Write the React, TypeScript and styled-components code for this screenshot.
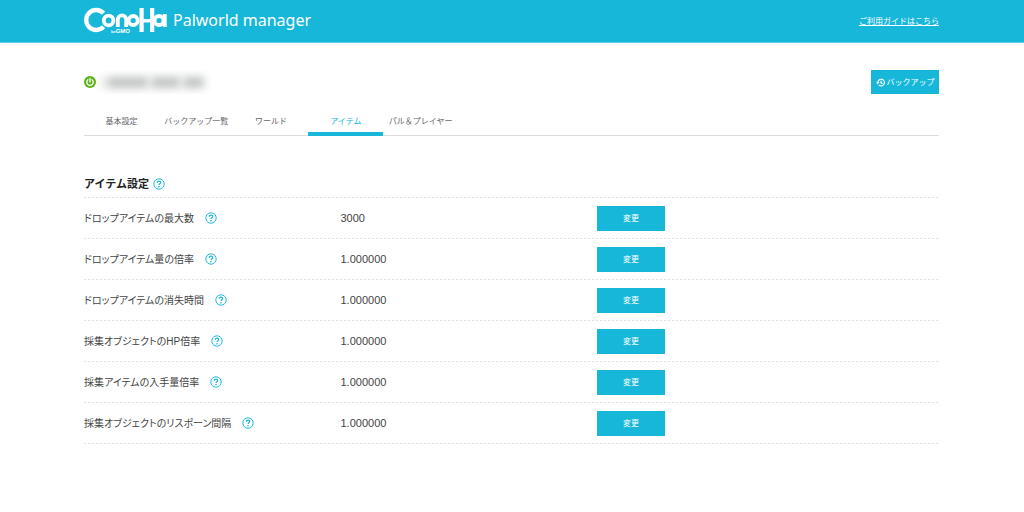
import React from "react";
import styled, { createGlobalStyle, css } from "styled-components";

const cyan = "#17b7da";

const GlobalStyle = createGlobalStyle`
  *, *::before, *::after { box-sizing: border-box; }
  body {
    margin: 0;
    background: #fff;
    color: #444;
    font-family: "Liberation Sans", "Noto Sans CJK JP", sans-serif;
    font-size: 10px;
    line-height: 16px;
  }
`;

const Header = styled.header`
  display: flex;
  align-items: center;
  justify-content: space-between;
  height: 43px;
  padding: 0 85px 3px 84px;
  background: ${cyan};
  border-bottom: 1px solid #5acce5;
`;

const Brand = styled.a`
  display: flex;
  align-items: center;
  gap: 6px;
  color: #fff;
  text-decoration: none;
`;

const BrandName = styled.span`
  font: 400 16px/24px "Noto Sans", "Open Sans", sans-serif;
`;

const GuideLink = styled.a`
  padding-top: 5px;
  color: #fff;
  font-size: 8px;
  text-underline-offset: 1px;
`;

const Page = styled.main`
  padding: 27px 85px 40px 84px;
`;

const ServerBar = styled.div`
  display: flex;
  align-items: center;
  justify-content: space-between;
`;

const Server = styled.div`
  display: flex;
  align-items: center;
`;

const HiddenName = styled.div`
  display: flex;
  align-items: center;
  gap: 3px;
  width: 116px;
  height: 24px;
  padding: 0 8px 0 4px;
  overflow: hidden;
`;

const Smudge = styled.span<{ $grow: number; $faint?: boolean }>`
  flex: ${(p) => p.$grow} 1 0;
  height: 11px;
  background: ${(p) => (p.$faint ? "#dfe8d8" : "#bfc2c2")};
  filter: blur(4px);
`;

const button = css`
  border: 0;
  border-radius: 0;
  background: ${cyan};
  color: #fff;
  font-family: inherit;
  font-size: 8px;
  line-height: 16px;
  cursor: pointer;
`;

const BackupButton = styled.button`
  ${button}
  display: flex;
  align-items: center;
  justify-content: center;
  gap: 2px;
  width: 68px;
  height: 24px;
  padding: 1px 0 0;
`;

const ChangeButton = styled.button`
  ${button}
  width: 68px;
  height: 25px;
  padding: 2px 0 0;
`;

const Tabs = styled.nav`
  display: flex;
  margin-top: 12px;
  border-bottom: 1px solid #dcdcdc;
`;

const Tab = styled.a<{ $active?: boolean }>`
  width: 8.75%;
  height: 30px;
  margin-bottom: -1px;
  padding-top: 8px;
  border-bottom: 4px solid ${(p) => (p.$active ? cyan : "transparent")};
  color: ${(p) => (p.$active ? cyan : "#666")};
  font-size: 8px;
  text-align: center;
  text-decoration: none;
  white-space: nowrap;
`;

const SectionHead = styled.div`
  display: flex;
  align-items: center;
  gap: 4px;
  margin-top: 40px;
  padding-bottom: 5px;
`;

const SectionTitle = styled.h1`
  margin: 0;
  color: #222;
  font-size: 11px;
  font-weight: 700;
`;

const dottedLine = "repeating-linear-gradient(90deg, #e0e0e0 0 2px, transparent 2px 4px)";

const Settings = styled.dl`
  margin: 0;
  padding-top: 1px;
  background: ${dottedLine} top / 100% 1px no-repeat;
`;

const Row = styled.div`
  display: flex;
  align-items: center;
  height: 41px;
  padding-bottom: 1px;
  background: ${dottedLine} bottom / 100% 1px no-repeat;
`;

const Label = styled.dt`
  display: flex;
  flex: 0 0 30%;
  align-items: center;
  gap: 11px;
  font-feature-settings: "palt";
`;

const LabelText = styled.span`
  padding-top: 2px;
`;

const Value = styled.dd`
  flex: 0 0 30%;
  margin: 0;
  font-size: 11px;
`;

const Action = styled.dd`
  margin: 0;
`;

const HelpButton = styled.button`
  display: flex;
  padding: 0;
  border: 0;
  background: none;
  color: ${cyan};
  cursor: pointer;
`;

function Help({ topic }: { topic: string }) {
  return (
    <HelpButton type="button" aria-label={`${topic} ヘルプ`}>
      <svg width="12" height="12" viewBox="0 0 24 24" fill="none" stroke="currentColor" aria-hidden="true">
        <circle cx="12" cy="12" r="10.4" strokeWidth="1.9" />
        <path d="M8.600 9.400C8.600 7.400 10 6.200 12 6.200s3.400 1.200 3.400 3c0 2.200-3.300 2.400-3.300 5" strokeWidth="2.500" />
        <circle cx="12" cy="17.400" r="1.600" fill="currentColor" stroke="none" />
      </svg>
    </HelpButton>
  );
}

const Tagline = styled.text`
  fill: #fff;
  stroke: none;
  font: 700 6px "Liberation Sans", sans-serif;
`;

function Logo() {
  return (
    <svg width="83" height="26" viewBox="0 0 83 26" fill="none" stroke="#fff" strokeWidth="3.8" role="img" aria-label="ConoHa by GMO">
      <path d="M19.500 6.200A10 10 0 1 0 19.500 19.800" strokeWidth="4.400" />
      <circle cx="24.600" cy="13.500" r="4.800" />
      <path d="M33.800 20V12.600a4.200 4.200 0 0 1 8.400 0V20" />
      <circle cx="49.200" cy="13.500" r="4.500" />
      <path d="M57.600 1V25M68.200 1V25" strokeWidth="4.200" />
      <path d="M57 13.800H69" strokeWidth="3.400" />
      <circle cx="75" cy="13.500" r="4.500" />
      <path d="M80.800 7V20" />
      <Tagline x="27" y="26">
        <tspan fontSize="4">by</tspan>GMO
      </Tagline>
    </svg>
  );
}

function PowerIcon() {
  return (
    <svg width="12" height="12" viewBox="0 0 24 24" fill="none" stroke="#fff" strokeWidth="2.600" strokeLinecap="round" aria-hidden="true">
      <circle cx="12" cy="12" r="12" fill="#5cb117" stroke="none" />
      <path d="M12 5v7M7.800 7.500a6.400 6.400 0 1 0 8.400 0" />
    </svg>
  );
}

function HistoryIcon() {
  return (
    <svg width="9" height="9" viewBox="0 0 18 18" fill="none" stroke="#fff" strokeWidth="2.400" aria-hidden="true">
      <path d="M3.400 9a6.700 6.700 0 1 1 2 5M10 5.500V10l3.200 1" />
      <path d="M0 8h7l-3.500 4.500z" fill="#fff" stroke="none" />
    </svg>
  );
}

const tabs = ["基本設定", "バックアップ一覧", "ワールド", "アイテム", "パル＆プレイヤー"];

const settings = [
  { label: "ドロップアイテムの最大数", value: "3000" },
  { label: "ドロップアイテム量の倍率", value: "1.000000" },
  { label: "ドロップアイテムの消失時間", value: "1.000000" },
  { label: "採集オブジェクトのHP倍率", value: "1.000000" },
  { label: "採集アイテムの入手量倍率", value: "1.000000" },
  { label: "採集オブジェクトのリスポーン間隔", value: "1.000000" },
];

export default function App() {
  return (
    <>
      <GlobalStyle />
      <Header>
        <Brand href="#">
          <Logo />
          <BrandName>Palworld manager</BrandName>
        </Brand>
        <GuideLink href="#">ご利用ガイドはこちら</GuideLink>
      </Header>
      <Page>
        <ServerBar>
          <Server>
            <PowerIcon />
            <HiddenName>
              <Smudge $grow={1} $faint />
              <Smudge $grow={10} />
              <Smudge $grow={7} />
              <Smudge $grow={5} />
            </HiddenName>
          </Server>
          <BackupButton type="button">
            <HistoryIcon />
            バックアップ
          </BackupButton>
        </ServerBar>
        <Tabs>
          {tabs.map((name) => (
            <Tab key={name} href="#" $active={name === "アイテム"}>
              {name}
            </Tab>
          ))}
        </Tabs>
        <SectionHead>
          <SectionTitle>アイテム設定</SectionTitle>
          <Help topic="アイテム設定" />
        </SectionHead>
        <Settings>
          {settings.map(({ label, value }) => (
            <Row key={label}>
              <Label>
                <LabelText>{label}</LabelText>
                <Help topic={label} />
              </Label>
              <Value>{value}</Value>
              <Action>
                <ChangeButton type="button">変更</ChangeButton>
              </Action>
            </Row>
          ))}
        </Settings>
      </Page>
    </>
  );
}
